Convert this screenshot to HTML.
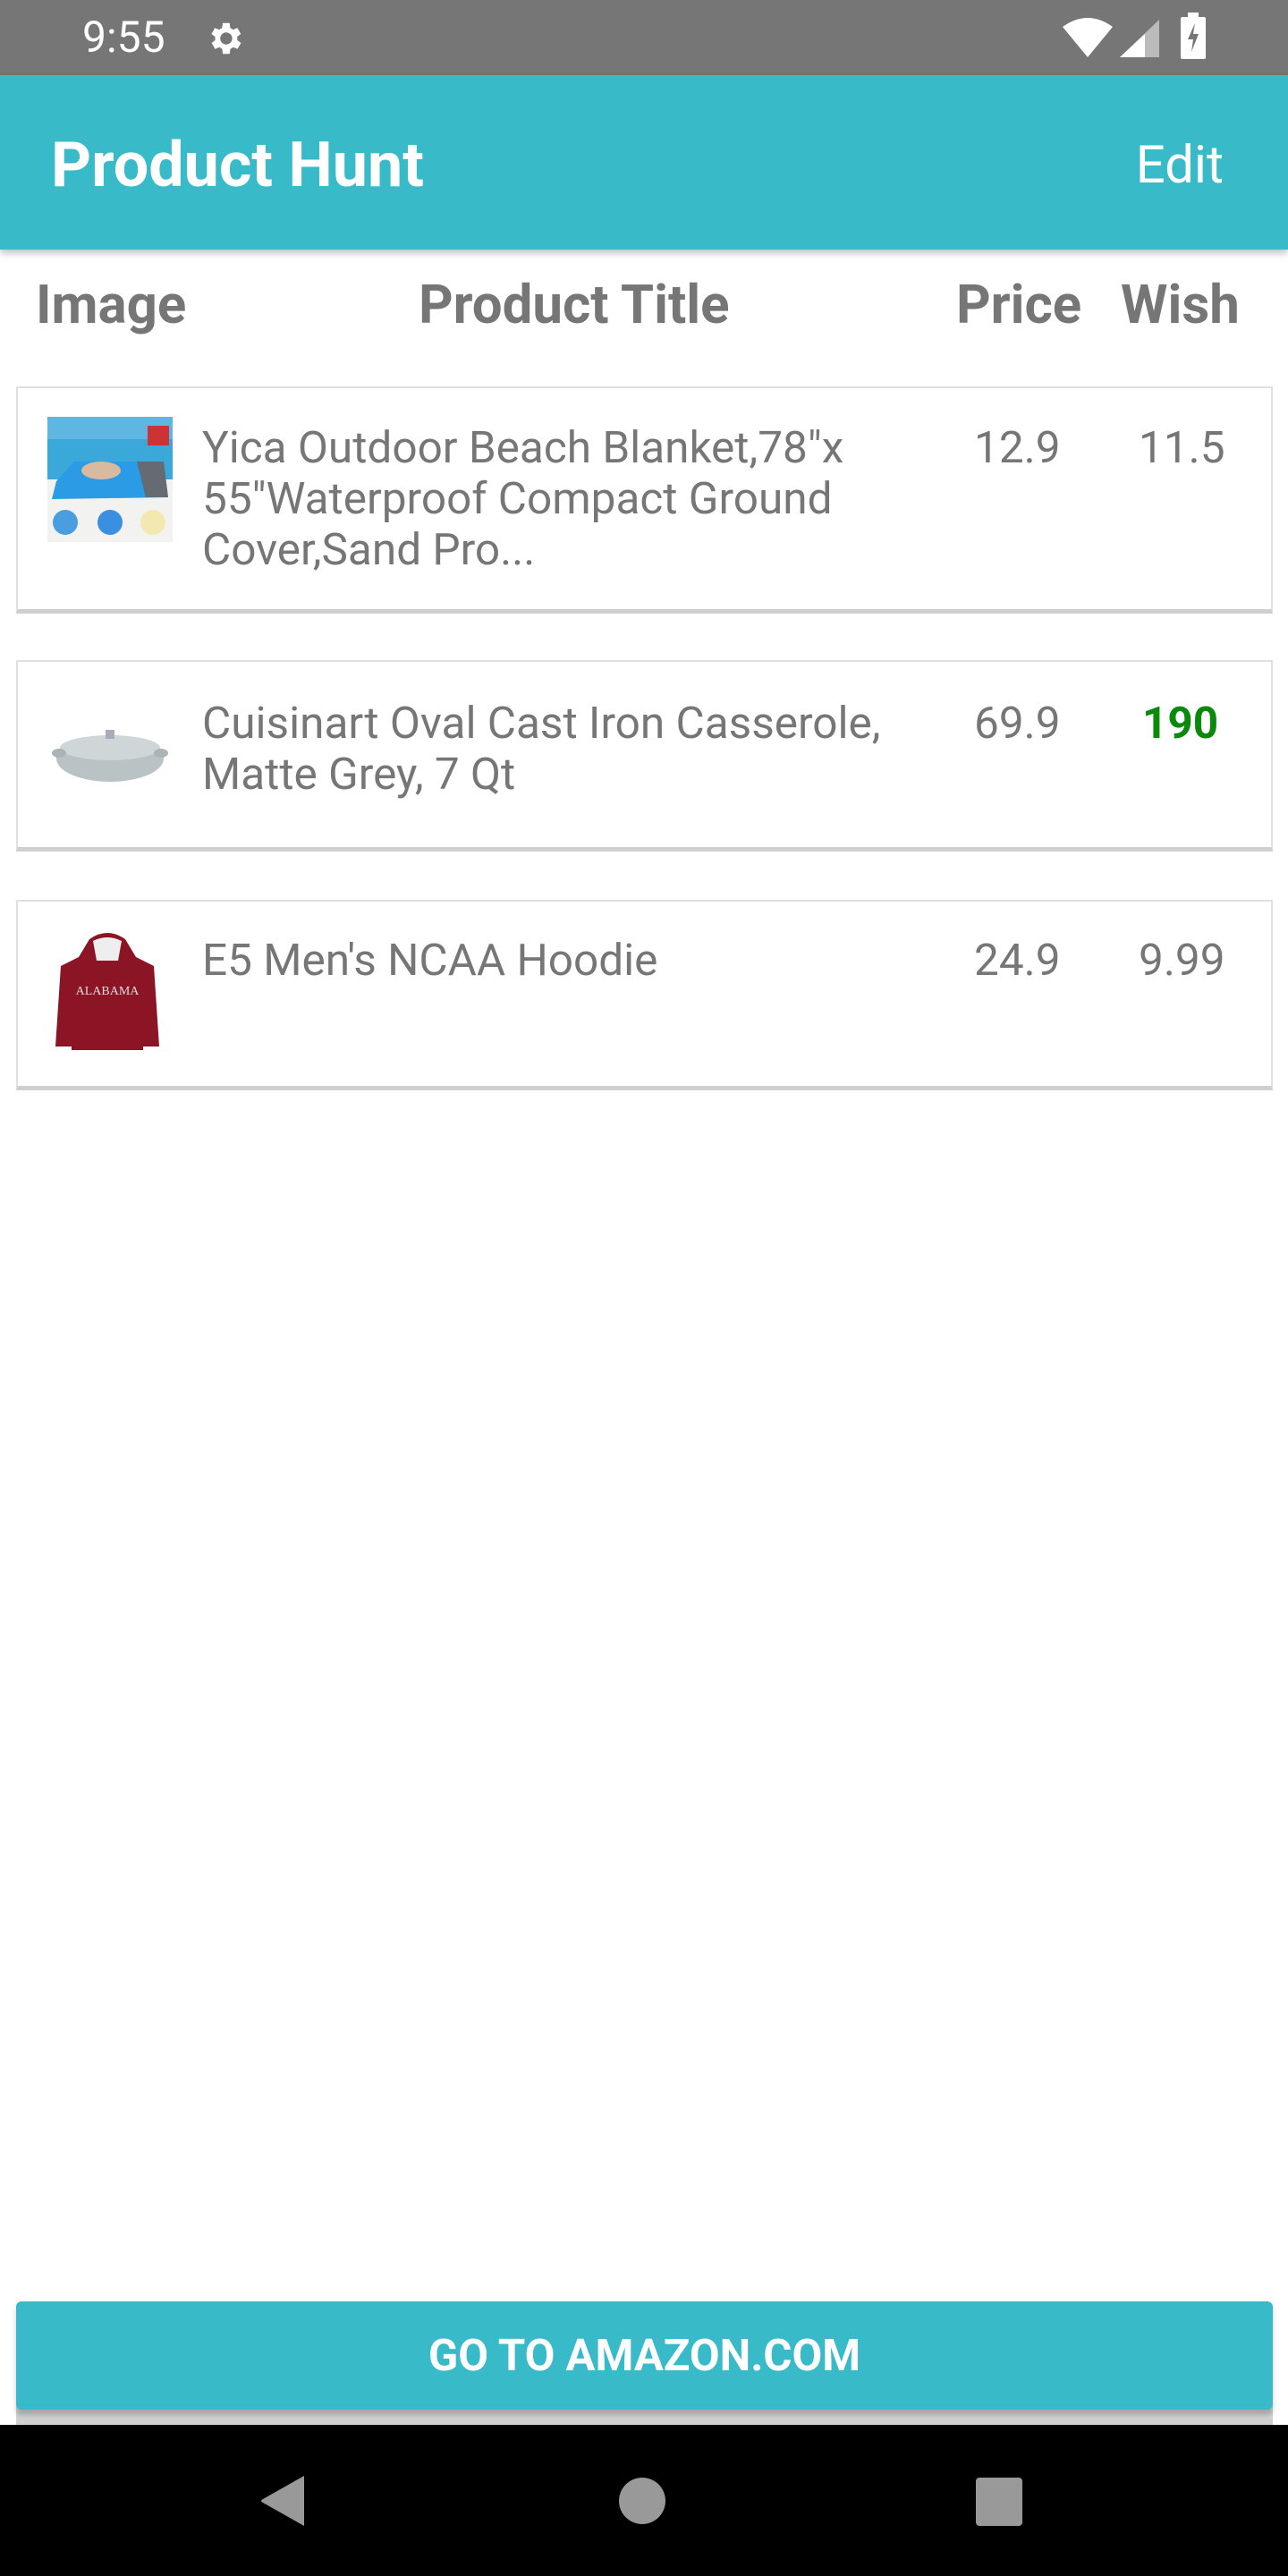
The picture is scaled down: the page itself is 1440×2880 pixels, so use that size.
<!DOCTYPE html>
<html><head><meta charset="utf-8"><style>
*{margin:0;padding:0;box-sizing:border-box}
body{width:1440px;height:2880px;position:relative;background:#fff;font-family:"Roboto","Liberation Sans",sans-serif;overflow:hidden}
.a{position:absolute}
.status{left:0;top:0;width:1440px;height:84px;background:#767676}
.bar{left:0;top:84px;width:1440px;height:195px;background:#38bac9;box-shadow:0 4px 8px rgba(0,0,0,.25)}
.hd{color:#767676;font-weight:bold;font-size:60px;top:303px;line-height:76px}
.card{left:18px;width:1405px;background:#fff;border:2px solid #e0e0e0;border-bottom:5px solid #cfcfcf}
.t{color:#767676;font-size:49.5px;line-height:57px}
.btn{left:18px;top:2573px;width:1405px;height:121px;background:#38bac9;border-radius:6px;box-shadow:0 6px 6px rgba(0,0,0,.2);color:#fff;font-weight:bold;font-size:49px;text-align:center;line-height:121px}
.nav{left:0;top:2711px;width:1440px;height:169px;background:#000}
</style></head><body>
<div class="a status"></div>
<div class="a" style="left:92px;top:13px;color:#fff;font-size:48px;line-height:58px">9:55</div>
<svg class="a" style="left:228px;top:20px" width="46" height="46" viewBox="0 0 24 24"><path fill="#fff" d="M19.4 13a7.5 7.5 0 000-2l2.1-1.6-2-3.5-2.5 1a7 7 0 00-1.7-1L15 3h-4l-.4 2.9a7 7 0 00-1.7 1l-2.5-1-2 3.5L6.6 11a7.5 7.5 0 000 2l-2.1 1.6 2 3.5 2.5-1a7 7 0 001.7 1L11 21h4l.4-2.9a7 7 0 001.7-1l2.5 1 2-3.5zM13 15.5a3.5 3.5 0 110-7 3.5 3.5 0 010 7z"/></svg>
<svg class="a" style="left:1188px;top:20px" width="56" height="44" viewBox="0 0 56 44"><path fill="#fff" d="M0 10 Q28 -10 56 10 L28 44Z"/></svg>
<svg class="a" style="left:1252px;top:22px" width="44" height="42" viewBox="0 0 44 42"><path fill="#bbb" d="M44 0V42H0Z"/><path fill="#fff" d="M28 16V42H0L28 16Z"/></svg>
<svg class="a" style="left:1320px;top:14px" width="28" height="52" viewBox="0 0 28 52"><rect x="8" y="0" width="12" height="6" fill="#fff"/><rect x="0" y="5" width="28" height="47" rx="2" fill="#fff"/><path d="M16 12 L8 30 H14 L12 44 L20 24 H14Z" fill="#767676"/></svg>
<div class="a bar"></div>
<div class="a" style="left:57px;top:144px;color:#fff;font-weight:bold;font-size:70px;line-height:82px">Product Hunt</div>
<div class="a" style="right:72px;top:150px;color:#fff;font-size:58px;line-height:70px">Edit</div>
<div class="a hd" style="left:40px">Image</div>
<div class="a hd" style="left:468px">Product Title</div>
<div class="a hd" style="left:1069px">Price</div>
<div class="a hd" style="left:1253px">Wish</div>

<div class="a card" style="top:432px;height:254px"></div>
<svg class="a" style="left:53px;top:466px" width="140" height="140" viewBox="0 0 140 140"><rect width="140" height="140" fill="#f2f2f0"/><rect width="140" height="70" fill="#3aa8d8"/><rect width="140" height="25" fill="#5fb6e0"/><path d="M10 72 L30 50 H130 L135 90 L5 92Z" fill="#2b9be6"/><path d="M100 50 H130 L135 90 H110Z" fill="#666a72"/><rect x="112" y="10" width="24" height="22" fill="#c33"/><ellipse cx="60" cy="60" rx="22" ry="10" fill="#d9b9a0"/><circle cx="20" cy="118" r="14" fill="#4a9ee0"/><circle cx="70" cy="118" r="14" fill="#3a8fe0"/><circle cx="118" cy="118" r="14" fill="#f3e9b0"/></svg>
<div class="a t" style="left:226px;top:473px;width:820px">Yica Outdoor Beach Blanket,78"x<br>55"Waterproof Compact Ground<br>Cover,Sand Pro...</div>
<div class="a t" style="left:1089px;top:473px">12.9</div>
<div class="a t" style="left:1273px;top:473px">11.5</div>

<div class="a card" style="top:738px;height:214px"></div>
<svg class="a" style="left:58px;top:808px" width="130" height="80" viewBox="0 0 130 80"><ellipse cx="65" cy="40" rx="60" ry="26" fill="#b9c3c6"/><ellipse cx="65" cy="28" rx="56" ry="14" fill="#cfd6d8"/><rect x="60" y="8" width="10" height="10" fill="#aab"/><ellipse cx="8" cy="34" rx="8" ry="5" fill="#aab4b7"/><ellipse cx="122" cy="34" rx="8" ry="5" fill="#aab4b7"/></svg>
<div class="a t" style="left:226px;top:781px">Cuisinart Oval Cast Iron Casserole,<br>Matte Grey, 7 Qt</div>
<div class="a t" style="left:1089px;top:781px">69.9</div>
<div class="a t" style="left:1277px;top:781px;color:#0a8a0a;font-weight:bold">190</div>

<div class="a card" style="top:1006px;height:213px"></div>
<svg class="a" style="left:60px;top:1040px" width="120" height="138" viewBox="0 0 120 138"><path d="M40 10 Q60 -4 80 10 L92 30 L112 40 L118 130 H100 L100 134 H20 L20 130 H2 L8 40 L28 30Z" fill="#8b1524"/><path d="M44 12 Q60 4 76 12 L72 34 H48Z" fill="#eee"/><text x="60" y="72" font-size="14" fill="#ddd" text-anchor="middle" font-family="Liberation Serif,serif">ALABAMA</text></svg>
<div class="a t" style="left:226px;top:1046px">E5 Men's NCAA Hoodie</div>
<div class="a t" style="left:1089px;top:1046px">24.9</div>
<div class="a t" style="left:1273px;top:1046px">9.99</div>

<div class="a" style="left:18px;top:2690px;width:1405px;height:21px;background:#d0d0d0"></div>
<div class="a btn">GO TO AMAZON.COM</div>
<div class="a nav"></div>
<svg class="a" style="left:290px;top:2766px" width="56" height="60" viewBox="0 0 56 60"><path d="M50 2 V58 L4 32 Q0 30 4 28Z" fill="#999"/></svg>
<div class="a" style="left:692px;top:2770px;width:52px;height:52px;border-radius:50%;background:#999"></div>
<div class="a" style="left:1091px;top:2770px;width:52px;height:54px;border-radius:4px;background:#999"></div>
</body></html>
